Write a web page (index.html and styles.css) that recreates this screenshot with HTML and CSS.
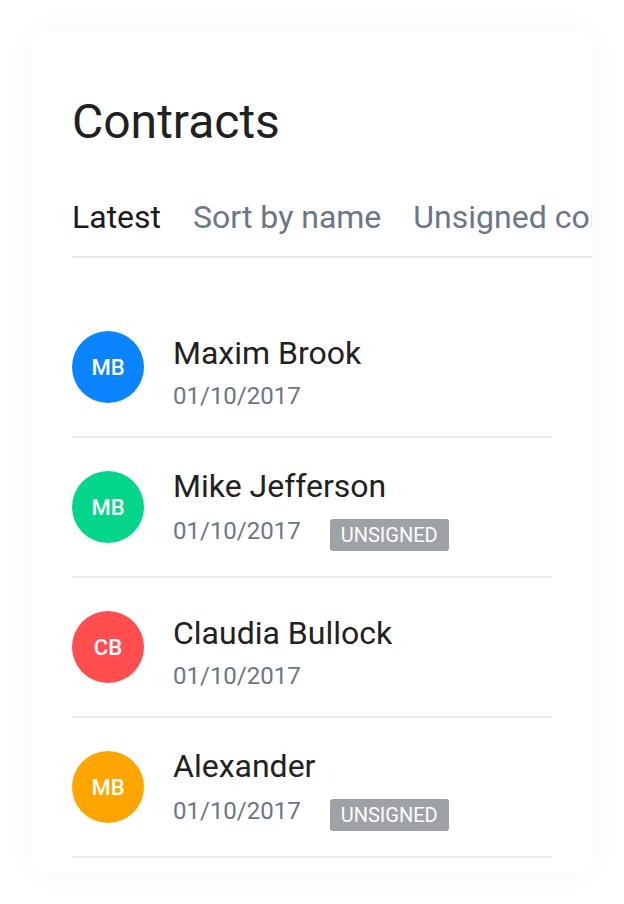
FILE: index.html
```html
<!DOCTYPE html>
<html lang="en">
<head>
<meta charset="utf-8">
<title>Contracts</title>
<link rel="stylesheet" href="styles.css">
</head>
<body>
<div class="card">
  <h1 class="title">Contracts</h1>
  <div class="tabs">
    <div class="tab active">Latest</div>
    <div class="tab">Sort by name</div>
    <div class="tab">Unsigned contracts</div>
  </div>
  <ul class="list">
    <li class="row">
      <div class="avatar blue">MB</div>
      <div class="info">
        <div class="name">Maxim Brook</div>
        <div class="meta"><span class="date">01/10/2017</span></div>
      </div>
    </li>
    <li class="row">
      <div class="avatar green">MB</div>
      <div class="info">
        <div class="name">Mike Jefferson</div>
        <div class="meta with-badge"><span class="date">01/10/2017</span><span class="badge">UNSIGNED</span></div>
      </div>
    </li>
    <li class="row">
      <div class="avatar red">CB</div>
      <div class="info">
        <div class="name">Claudia Bullock</div>
        <div class="meta"><span class="date">01/10/2017</span></div>
      </div>
    </li>
    <li class="row">
      <div class="avatar orange">MB</div>
      <div class="info">
        <div class="name">Alexander</div>
        <div class="meta with-badge"><span class="date">01/10/2017</span><span class="badge">UNSIGNED</span></div>
      </div>
    </li>
  </ul>
</div>
</body>
</html>
```

FILE: styles.css
```css
* { box-sizing: border-box; }
html, body {
  margin: 0;
  padding: 0;
  background: #ffffff;
}
body {
  font-family: Roboto, "Liberation Sans", sans-serif;
  color: #212121;
  padding: 32px;
}
.card {
  width: 560px;
  height: 840px;
  background: #ffffff;
  border-radius: 10px;
  box-shadow: 0 0 28px 6px rgba(0, 0, 0, 0.025);
  overflow: hidden;
  padding: 62px 40px 0 40px;
}
.title {
  margin: 0;
  font-size: 48px;
  line-height: 56px;
  font-weight: 400;
  color: #212121;
}
.tabs {
  display: flex;
  gap: 32px;
  margin-top: 48px;
  margin-right: -40px;
  border-bottom: 2px solid #e6e6eb;
  white-space: nowrap;
  overflow: hidden;
}
.tab {
  font-size: 32px;
  line-height: 38px;
  padding-bottom: 20px;
  margin-bottom: -2px;
  color: #6b7688;
  border-bottom: 2px solid transparent;
  flex: none;
}
.tab.active {
  color: #1a1a1a;
  border-bottom-color: #111111;
}
.list {
  list-style: none;
  margin: 40px 0 0 0;
  padding: 0;
}
.row {
  height: 140px;
  display: flex;
  align-items: center;
  gap: 29px;
  border-bottom: 2px solid #ececec;
}
.avatar {
  width: 72px;
  height: 72px;
  border-radius: 50%;
  flex: none;
  display: flex;
  align-items: center;
  justify-content: center;
  color: #ffffff;
  font-size: 22px;
  font-weight: 500;
}
.blue { background: #0a84ff; }
.green { background: #03d68a; }
.red { background: #ff4d50; }
.orange { background: #ffa500; }
.info {
  padding-top: 10px;
}
.name {
  font-size: 32px;
  line-height: 38px;
  color: #212121;
  margin-bottom: 10px;
}
.meta {
  display: flex;
  align-items: flex-start;
}
.meta.with-badge {
  margin-top: 12px;
  margin-bottom: 6px;
}
.date {
  font-size: 24px;
  line-height: 28px;
  color: #6b7688;
}
.badge {
  margin-left: 29px;
  margin-top: 2px;
  background: #9ea1a6;
  color: #ffffff;
  font-size: 20px;
  line-height: 20px;
  padding: 6px 11px;
  border-radius: 3px;
}
```
